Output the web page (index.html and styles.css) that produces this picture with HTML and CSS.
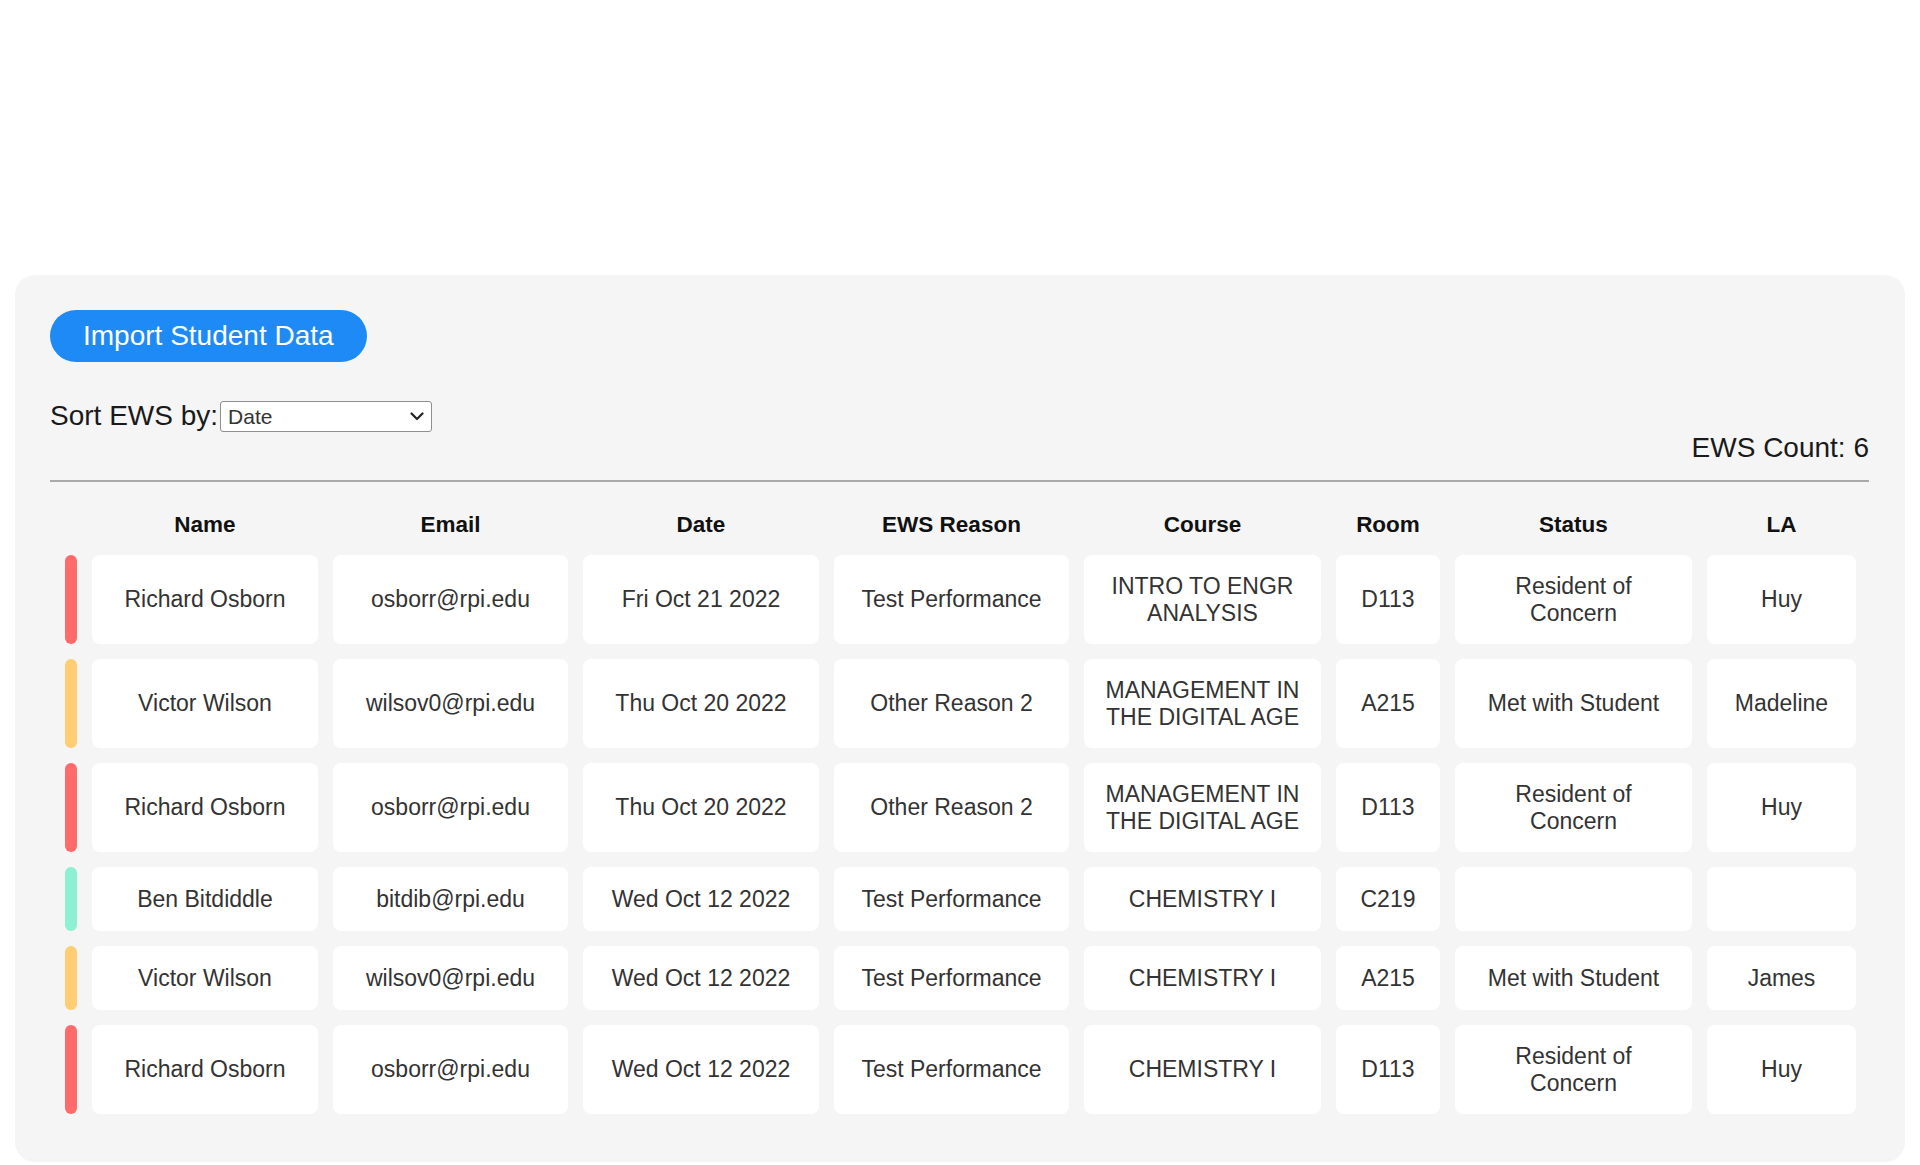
FILE: index.html
```html
<!DOCTYPE html>
<html lang="en">
<head>
<meta charset="utf-8">
<title>EWS</title>
<link rel="stylesheet" href="styles.css">
</head>
<body>
<main class="page">
  <section class="panel">
    <button class="import-btn" type="button">Import Student Data</button>
    <div class="sort-row">
      <label class="sort-label" for="sort">Sort EWS by:</label>
      <div class="select-wrap">
        <select id="sort" class="sort-select">
          <option>Date</option>
          <option>Name</option>
        </select>
        <svg class="chevron" width="14" height="9" viewBox="0 0 14 9"><path d="M1.5 1.5 L7 7 L12.5 1.5" fill="none" stroke="#222" stroke-width="2.2" stroke-linecap="round" stroke-linejoin="round"/></svg>
      </div>
    </div>
    <div class="count">EWS Count: 6</div>
    <hr class="divider">
    <div class="ews-table">
      <div class="th bar-col"></div>
      <div class="th">Name</div>
      <div class="th">Email</div>
      <div class="th">Date</div>
      <div class="th">EWS Reason</div>
      <div class="th">Course</div>
      <div class="th">Room</div>
      <div class="th">Status</div>
      <div class="th">LA</div>

      <div class="bar red"></div>
      <div class="td">Richard Osborn</div>
      <div class="td">osborr@rpi.edu</div>
      <div class="td">Fri Oct 21 2022</div>
      <div class="td">Test Performance</div>
      <div class="td">INTRO TO ENGR ANALYSIS</div>
      <div class="td">D113</div>
      <div class="td">Resident of Concern</div>
      <div class="td">Huy</div>

      <div class="bar yellow"></div>
      <div class="td">Victor Wilson</div>
      <div class="td">wilsov0@rpi.edu</div>
      <div class="td">Thu Oct 20 2022</div>
      <div class="td">Other Reason 2</div>
      <div class="td">MANAGEMENT IN THE DIGITAL AGE</div>
      <div class="td">A215</div>
      <div class="td">Met with Student</div>
      <div class="td">Madeline</div>

      <div class="bar red"></div>
      <div class="td">Richard Osborn</div>
      <div class="td">osborr@rpi.edu</div>
      <div class="td">Thu Oct 20 2022</div>
      <div class="td">Other Reason 2</div>
      <div class="td">MANAGEMENT IN THE DIGITAL AGE</div>
      <div class="td">D113</div>
      <div class="td">Resident of Concern</div>
      <div class="td">Huy</div>

      <div class="bar green"></div>
      <div class="td">Ben Bitdiddle</div>
      <div class="td">bitdib@rpi.edu</div>
      <div class="td">Wed Oct 12 2022</div>
      <div class="td">Test Performance</div>
      <div class="td">CHEMISTRY I</div>
      <div class="td">C219</div>
      <div class="td"></div>
      <div class="td"></div>

      <div class="bar yellow"></div>
      <div class="td">Victor Wilson</div>
      <div class="td">wilsov0@rpi.edu</div>
      <div class="td">Wed Oct 12 2022</div>
      <div class="td">Test Performance</div>
      <div class="td">CHEMISTRY I</div>
      <div class="td">A215</div>
      <div class="td">Met with Student</div>
      <div class="td">James</div>

      <div class="bar red"></div>
      <div class="td">Richard Osborn</div>
      <div class="td">osborr@rpi.edu</div>
      <div class="td">Wed Oct 12 2022</div>
      <div class="td">Test Performance</div>
      <div class="td">CHEMISTRY I</div>
      <div class="td">D113</div>
      <div class="td">Resident of Concern</div>
      <div class="td">Huy</div>
    </div>
  </section>
</main>
</body>
</html>
```
FILE: styles.css
```css
* { box-sizing: border-box; }
html, body {
  margin: 0;
  padding: 0;
  background: #ffffff;
  font-family: "Liberation Sans", Arial, sans-serif;
  color: #222;
}
.page {
  padding: 275px 15px 0 15px;
}
.panel {
  background: #f5f5f5;
  border-radius: 20px;
  padding: 35px 36px 33px 35px;
}
.import-btn {
  display: block;
  height: 52px;
  padding: 0 33px;
  border: none;
  border-radius: 26px;
  background: #1e8af6;
  color: #ffffff;
  font-family: "Liberation Sans", Arial, sans-serif;
  font-size: 28px;
  line-height: 52px;
  cursor: pointer;
}
.sort-row {
  display: flex;
  align-items: center;
  margin-top: 38px;
  height: 32px;
}
.sort-label {
  font-size: 28px;
  line-height: 32px;
  color: #1a1a1a;
}
.select-wrap {
  position: relative;
  width: 212px;
  height: 31px;
  margin-left: 2px;
}
.sort-select {
  appearance: none;
  -webkit-appearance: none;
  width: 100%;
  height: 100%;
  border: 1px solid #8f8f8f;
  border-radius: 3px;
  background: #ffffff;
  font-family: "Liberation Sans", Arial, sans-serif;
  font-size: 21px;
  color: #333;
  padding: 0 30px 0 7px;
}
.chevron {
  position: absolute;
  right: 8px;
  top: 11px;
  pointer-events: none;
}
.count {
  text-align: right;
  font-size: 28px;
  line-height: 32px;
  color: #1a1a1a;
}
.divider {
  margin: 16px 0 0 0;
  border: none;
  height: 2px;
  background: #a9a9a9;
}
.ews-table {
  margin-top: 13px;
  display: grid;
  grid-template-columns: 12px 226px 235px 236px 235px 237px 104px 237px 149px;
  gap: 15px;
  padding: 15px 15px 15px 15px;
}
.th {
  height: 30px;
  display: flex;
  align-items: center;
  justify-content: center;
  font-size: 22.5px;
  font-weight: bold;
  color: #111;
}
.td {
  background: #ffffff;
  border-radius: 8px;
  padding: 18px 20px;
  font-size: 23px;
  line-height: 26.5px;
  color: #333;
  text-align: center;
  display: flex;
  align-items: center;
  justify-content: center;
  min-height: 64px;
}
.bar {
  border-radius: 6px;
}
.bar.red { background: #ff6b6b; }
.bar.yellow { background: #ffcd72; }
.bar.green { background: #8ef0d2; }
```
